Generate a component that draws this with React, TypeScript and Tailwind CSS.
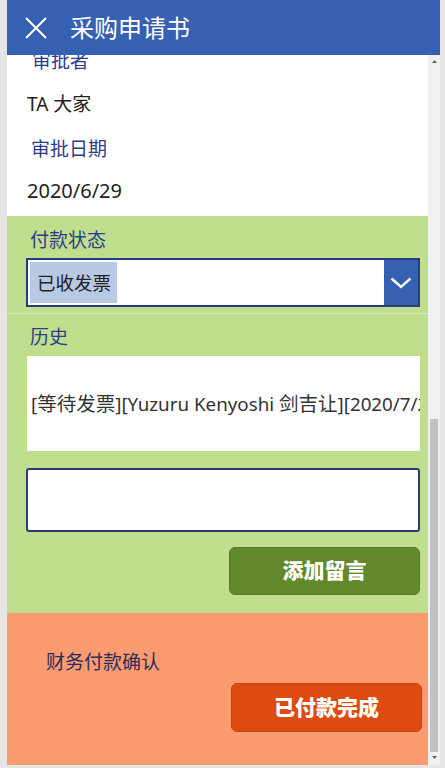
import React from 'react';

const font = { fontFamily: '"Noto Sans", "Noto Sans CJK SC", sans-serif' };

const Label: React.FC<{ text: string; className?: string }> = ({ text, className }) => (
  <div className={`text-[19px] leading-[24px] text-[#2f3c8a] ${className || ''}`}>{text}</div>
);

const Cjk: React.FC<{ children: React.ReactNode }> = ({ children }) => (
  <span className="text-[19.5px]">{children}</span>
);

const App: React.FC = () => {
  return (
    <div className="w-[445px] h-[768px] bg-[#e6e6e6] flex overflow-hidden" style={font}>
      <div className="w-[7px] shrink-0" />
      <div className="w-[433px] flex flex-col">
        {/* Header */}
        <div className="h-[55px] bg-[#3660b2] flex items-center shrink-0">
          <svg width="22" height="22" viewBox="0 0 22 22" className="ml-[18px]">
            <path d="M1 1 L21 21 M21 1 L1 21" stroke="white" strokeWidth="2" fill="none" />
          </svg>
          <div className="ml-[23px] text-[24px] leading-none text-white">采购申请书</div>
        </div>

        <div className="flex h-[710px]">
          {/* Scrolled content */}
          <div className="w-[421px] overflow-hidden">
            <div className="-mt-[8px]">
              <div className="bg-white">
                <Label text="审批者" className="h-[28px] pl-[25px] pt-[2px]" />
                <div className="h-[58px] flex items-center pl-[20px] text-[19px] text-[#222]">TA 大家</div>
                <Label text="审批日期" className="h-[33px] pl-[24px] pt-[4px]" />
                <div className="h-[50px] flex items-center pl-[20px] text-[20px] text-[#222]">2020/6/29</div>
              </div>

              {/* Green section */}
              <div className="bg-[#bfdf8f] flex flex-col">
                <Label text="付款状态" className="h-[42px] pl-[23px] pt-[12px]" />
                <div className="ml-[19px] w-[394px] h-[49px] border-2 border-[#2b3b7e] bg-white flex">
                  <div className="flex-1 flex items-center pl-[2px]">
                    <div className="w-[87px] h-[41px] bg-[#b8c9e3] flex items-center pl-[7px] text-[18.5px] text-[#222]">已收发票</div>
                  </div>
                  <div className="w-[34px] bg-[#3660b2] flex items-center justify-center">
                    <svg width="22" height="12" viewBox="0 0 22 12">
                      <path d="M1.5 1.5 L11 10 L20.5 1.5" stroke="white" strokeWidth="2.4" fill="none" />
                    </svg>
                  </div>
                </div>
                <div className="h-[6px]" />
                <div className="h-px bg-[#d3ebb2]" />
                <Label text="历史" className="h-[42px] pl-[23px] pt-[11px]" />
                <div className="ml-[20px] w-[393px] h-[95px] bg-white flex items-center overflow-hidden pl-[4px] pt-[1px]">
                  <div className="text-[18.8px] text-[#333] whitespace-nowrap">
                    [<Cjk>等待发票</Cjk>][Yuzuru Kenyoshi <Cjk>剑吉让</Cjk>][2020/7/2 18:34] <Cjk>已收发票</Cjk>
                  </div>
                </div>
                <div className="h-[17px]" />
                <div className="ml-[19px] w-[394px] h-[64px] bg-white border-2 border-[#2b3b7e] rounded-[3px]" />
                <div className="h-[15px]" />
                <div className="self-end mr-[8px] w-[191px] h-[48px] bg-[#62892a] border border-[#557a22] rounded-[6px] flex items-center justify-center text-white text-[21px] font-black">
                  添加留言
                </div>
                <div className="h-[18px]" />
              </div>

              {/* Orange section */}
              <div className="bg-[#fb9b6f] h-[152px] flex flex-col">
                <div className="h-[70px] flex items-end pl-[39px] pb-[7px] text-[19px] text-[#2b2d5e]">财务付款确认</div>
                <div className="self-end mr-[6px] w-[191px] h-[49px] bg-[#dd4c0e] border border-[#c2440d] rounded-[6px] flex items-center justify-center text-white text-[21px] font-black">
                  已付款完成
                </div>
              </div>
            </div>
          </div>

          {/* Scrollbar */}
          <div className="w-[12px] bg-[#f0f0f0] flex flex-col items-center">
            <div className="h-[12px] flex items-center justify-center">
              <svg width="5" height="3" viewBox="0 0 5 3"><path d="M0 3 L2.5 0 L5 3 Z" fill="#606060" /></svg>
            </div>
            <div className="h-[352px]" />
            <div className="w-[8px] h-[333px] bg-[#c1c1c1]" />
            <div className="h-[10px] flex items-center justify-center">
              <svg width="5" height="3" viewBox="0 0 5 3"><path d="M0 0 L2.5 3 L5 0 Z" fill="#606060" /></svg>
            </div>
          </div>
        </div>
      </div>
    </div>
  );
};

export default App;
